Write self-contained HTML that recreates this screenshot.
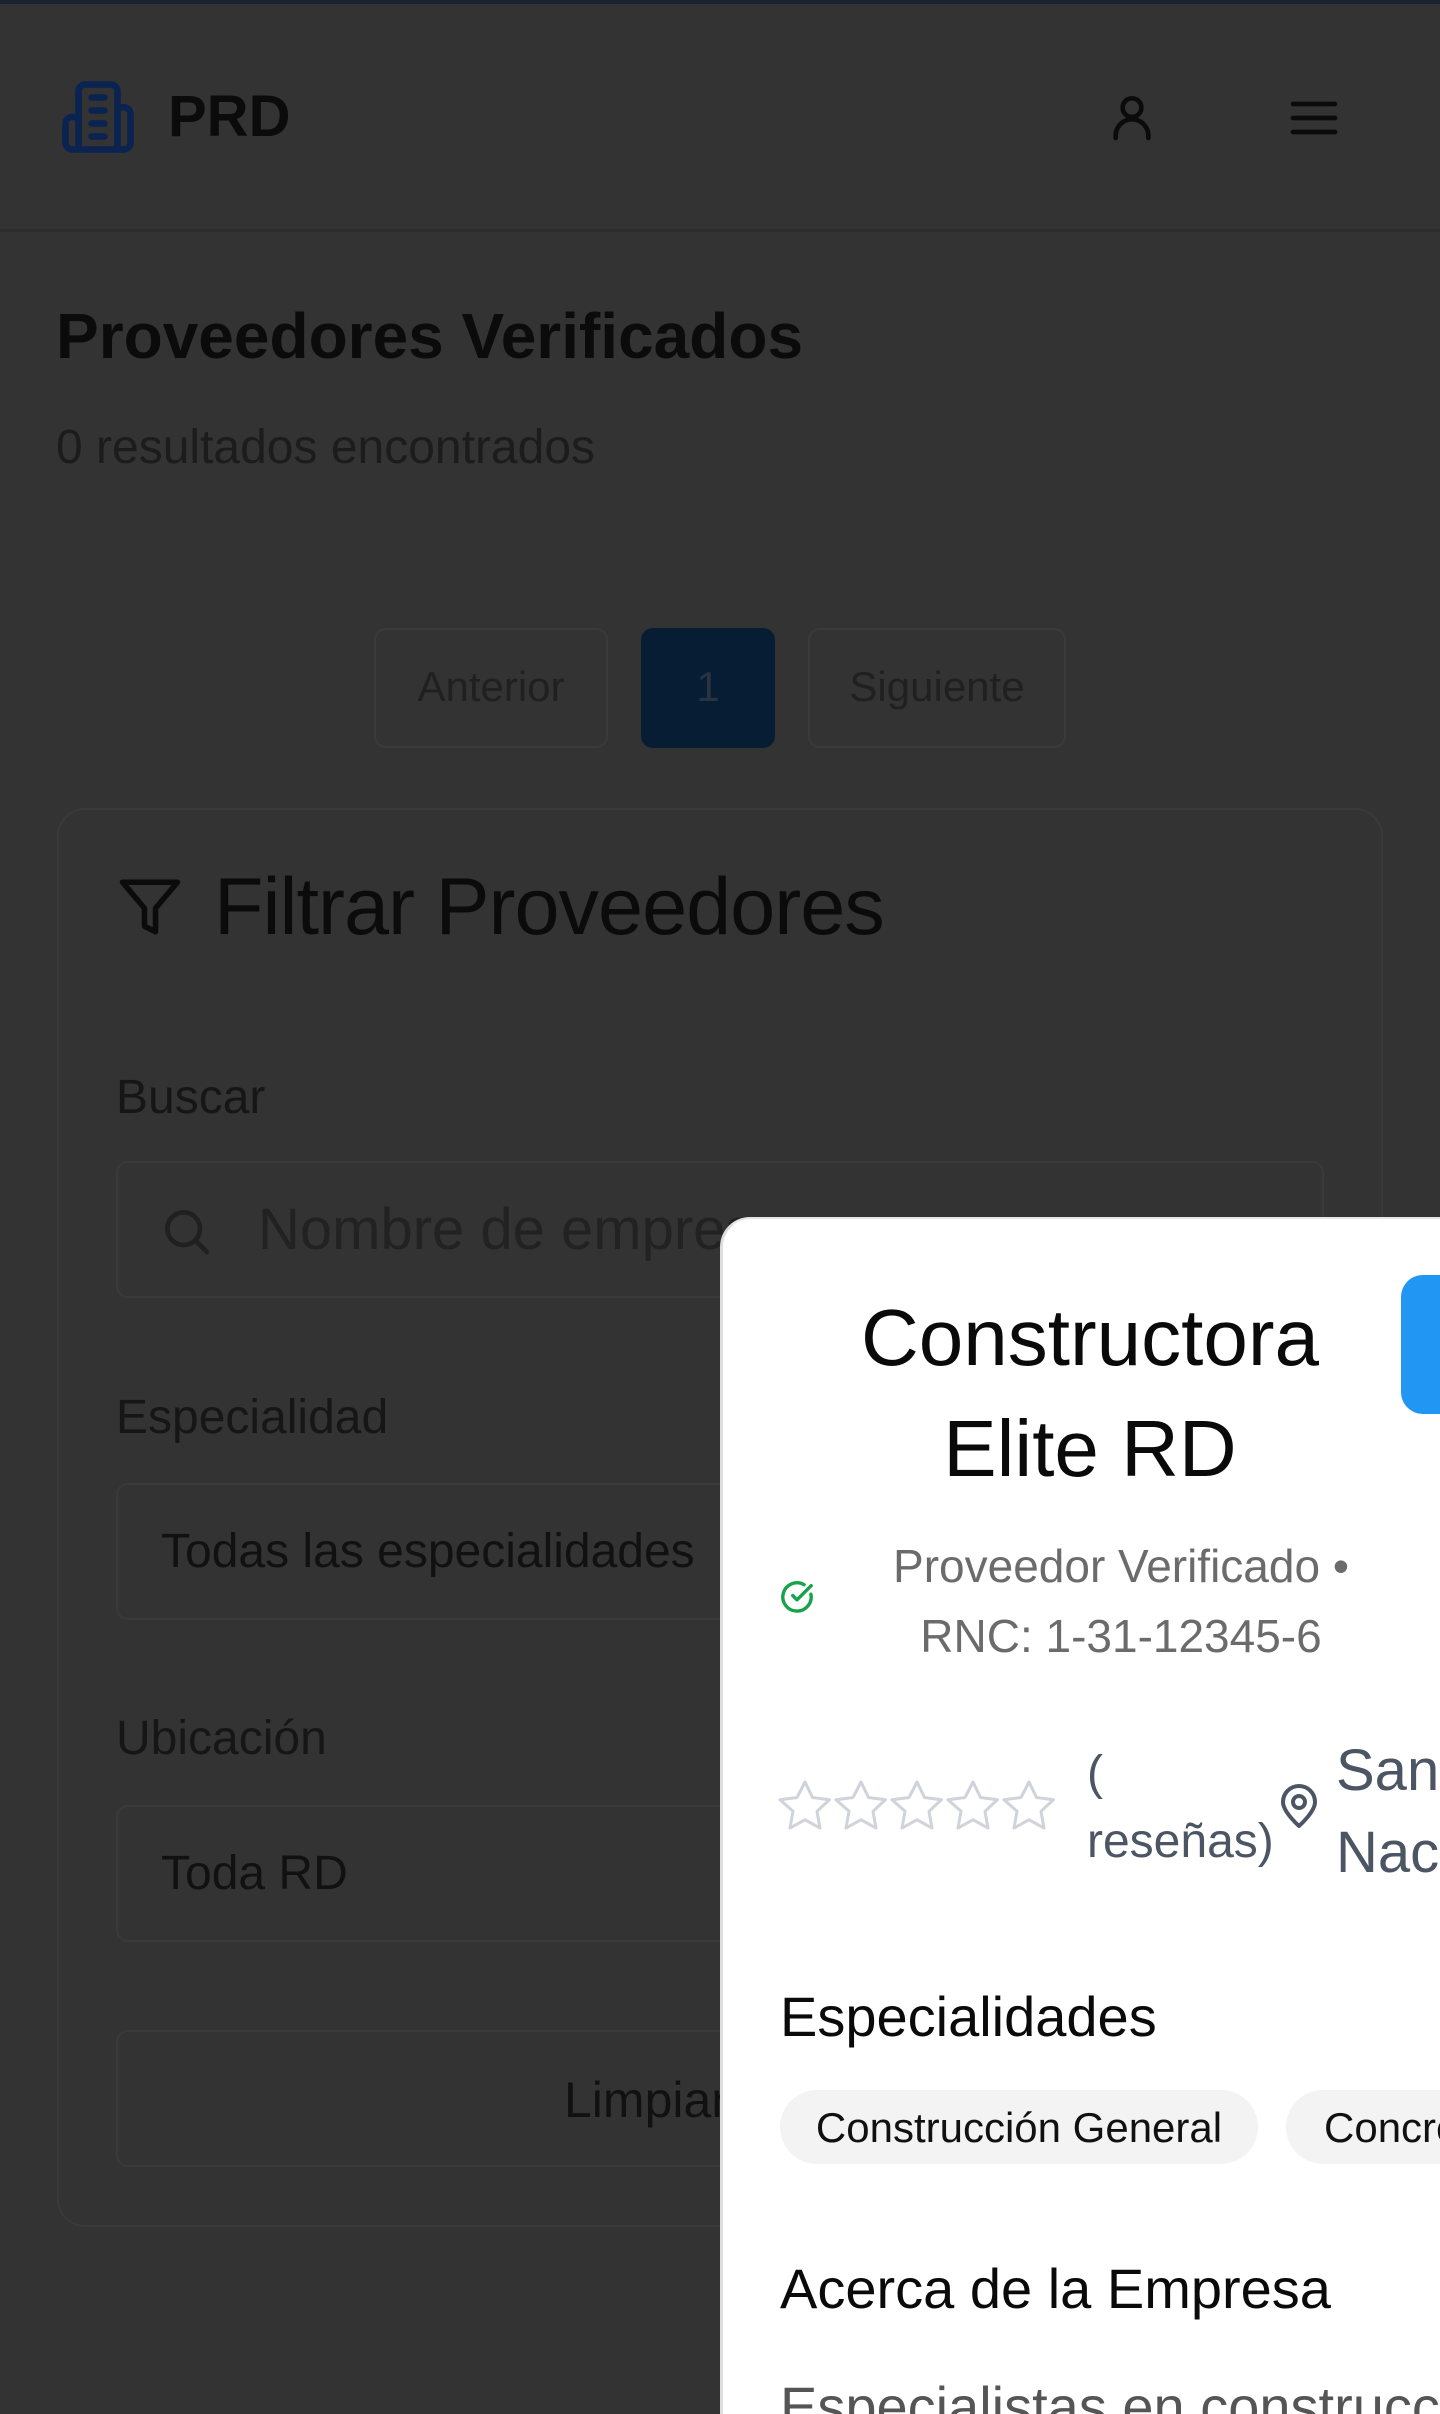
<!DOCTYPE html>
<html><head><meta charset="utf-8"><style>
*{margin:0;padding:0;box-sizing:border-box}
html,body{width:1440px;height:2414px;overflow:hidden}
body{background:#333333;font-family:"Liberation Sans",sans-serif;color:#0b0b0b}
#w{position:relative;width:1440px;height:2414px;overflow:hidden}
.a{position:absolute;white-space:nowrap}
.box{position:absolute;border:2px solid #3a3a3a;border-radius:12px}
</style></head><body><div id="w">
<div class="a" style="left:0;top:0;width:1440px;height:4px;background:#1b2232"></div>
<div class="a" style="left:0;top:229px;width:1440px;height:3px;background:#2d2d2d"></div>
<svg class="a" style="left:58px;top:78px" width="80" height="78" viewBox="0 0 24 24" fill="none" stroke="#0b2350" stroke-width="2" stroke-linecap="round" stroke-linejoin="round"><path d="M6 22V4a2 2 0 0 1 2-2h8a2 2 0 0 1 2 2v18Z"/><path d="M6 12H4a2 2 0 0 0-2 2v6a2 2 0 0 0 2 2h2"/><path d="M18 9h2a2 2 0 0 1 2 2v9a2 2 0 0 1-2 2h-2"/><path d="M10 6h4M10 10h4M10 14h4M10 18h4"/></svg>
<div class="a" style="left:168px;top:82px;font-size:58px;font-weight:700;line-height:70px">PRD</div>
<svg class="a" style="left:1104px;top:88px" width="56" height="58" viewBox="0 0 24 24" fill="none" stroke="#0b0b0b" stroke-width="2" stroke-linecap="round"><circle cx="12" cy="8" r="4"/><path d="M5 21v-1a7 7 0 0 1 14 0v1"/></svg>
<svg class="a" style="left:1286px;top:90px" width="56" height="56" viewBox="0 0 24 24" fill="none" stroke="#0b0b0b" stroke-width="2" stroke-linecap="round"><path d="M3 6h18M3 12h18M3 18h18"/></svg>
<div class="a" style="left:56px;top:298px;font-size:64px;font-weight:700;line-height:76px">Proveedores Verificados</div>
<div class="a" style="left:56px;top:420px;font-size:48px;line-height:56px;color:#1c1c1c">0 resultados encontrados</div>
<div class="box" style="left:374px;top:628px;width:234px;height:120px"></div>
<div class="a" style="left:374px;top:663px;width:234px;text-align:center;font-size:42px;color:#202020">Anterior</div>
<div class="a" style="left:641px;top:628px;width:134px;height:120px;border-radius:12px;background:#061d33"></div>
<div class="a" style="left:641px;top:663px;width:134px;text-align:center;font-size:42px;color:#2a3340">1</div>
<div class="box" style="left:808px;top:628px;width:258px;height:120px"></div>
<div class="a" style="left:808px;top:663px;width:258px;text-align:center;font-size:42px;color:#202020">Siguiente</div>
<div class="box" style="left:57px;top:808px;width:1326px;height:1419px;border-radius:28px"></div>
<svg class="a" style="left:116px;top:874px" width="68" height="66" viewBox="0 0 24 24" fill="none" stroke="#0b0b0b" stroke-width="2" stroke-linejoin="round"><path d="M22 3H2l8 9.46V19l4 2v-8.54L22 3z"/></svg>
<div class="a" style="left:214px;top:860px;font-size:81px;font-weight:500;line-height:94px;letter-spacing:-1px">Filtrar Proveedores</div>
<div class="a" style="left:116px;top:1070px;font-size:48px;color:#161616">Buscar</div>
<div class="box" style="left:116px;top:1161px;width:1208px;height:137px"></div>
<svg class="a" style="left:158px;top:1203px" width="56" height="56" viewBox="0 0 24 24" fill="none" stroke="#202020" stroke-width="2" stroke-linecap="round"><circle cx="11" cy="11" r="7"/><path d="M21 21l-4.3-4.3"/></svg>
<div class="a" style="left:258px;top:1196px;font-size:58px;color:#222">Nombre de empresa</div>
<div class="a" style="left:116px;top:1390px;font-size:48px;color:#161616">Especialidad</div>
<div class="box" style="left:116px;top:1483px;width:1208px;height:137px"></div>
<div class="a" style="left:161px;top:1524px;font-size:48px;color:#111">Todas las especialidades</div>
<div class="a" style="left:116px;top:1711px;font-size:48px;color:#161616">Ubicación</div>
<div class="box" style="left:116px;top:1805px;width:1208px;height:137px"></div>
<div class="a" style="left:161px;top:1846px;font-size:48px;color:#111">Toda RD</div>
<div class="box" style="left:116px;top:2030px;width:1208px;height:137px"></div>
<div class="a" style="left:564px;top:2071px;font-size:50px;color:#111">Limpiar Filtros</div>

<div class="a" style="left:720px;top:1217px;width:720px;height:1197px;background:#fff;border-radius:30px 0 0 0;border-left:3px solid #ddd;border-top:2px solid #e5e5e5"></div>
<div class="a" style="left:1401px;top:1275px;width:39px;height:139px;background:#2196f3;border-radius:22px 0 0 22px"></div>
<div class="a" style="left:790px;top:1282px;width:600px;text-align:center;font-size:80px;font-weight:500;line-height:111px;color:#0a0a0a;white-space:normal">Constructora<br>Elite RD</div>
<svg class="a" style="left:780px;top:1580px" width="34" height="34" viewBox="0 0 24 24" fill="none" stroke="#16a34a" stroke-width="2.4" stroke-linecap="round" stroke-linejoin="round"><path d="M21.8 10A10 10 0 1 1 17 3.3"/><path d="M9 11l3 3L22 4"/></svg>
<div class="a" style="left:846px;top:1531px;width:550px;text-align:center;font-size:46px;line-height:70px;color:#6b6b6b;white-space:normal">Proveedor Verificado •<br>RNC: 1-31-12345-6</div>
<svg class="a" style="left:778px;top:1778px" width="282" height="58" viewBox="0 0 282 56" fill="none" stroke="#cfd3da" stroke-width="3" stroke-linejoin="round">
<g id="s"><path d="M27 3l7.5 15.5 17 2.2-12.5 11.6 3 16.7-15-8.2-15 8.2 3-16.7L2 20.7l17-2.2z"/></g>
<use href="#s" x="56"/><use href="#s" x="112"/><use href="#s" x="168"/><use href="#s" x="224"/></svg>
<div class="a" style="left:1087px;top:1740px;font-size:48px;line-height:68px;color:#4b5563;white-space:normal">(<br>reseñas)</div>
<svg class="a" style="left:1275px;top:1780px" width="48" height="52" viewBox="0 0 24 24" fill="none" stroke="#4b5563" stroke-width="2" stroke-linecap="round" stroke-linejoin="round"><path d="M20 10c0 5-8 12-8 12s-8-7-8-12a8 8 0 0 1 16 0z"/><circle cx="12" cy="10" r="3"/></svg>
<div class="a" style="left:1336px;top:1730px;font-size:58px;line-height:82px;color:#4b5563;white-space:normal">Santiago<br>Nacional</div>
<div class="a" style="left:780px;top:1984px;font-size:56px;font-weight:500;color:#0a0a0a">Especialidades</div>
<div class="a" style="left:780px;top:2090px;width:478px;height:74px;border-radius:37px;background:#f3f3f3"></div>
<div class="a" style="left:780px;top:2104px;width:478px;text-align:center;font-size:42px;color:#111">Construcción General</div>
<div class="a" style="left:1286px;top:2090px;width:300px;height:74px;border-radius:37px;background:#f3f3f3"></div>
<div class="a" style="left:1324px;top:2104px;font-size:42px;color:#111">Concreto</div>
<div class="a" style="left:780px;top:2256px;font-size:56px;font-weight:500;color:#0a0a0a">Acerca de la Empresa</div>
<div class="a" style="left:780px;top:2374px;font-size:56px;color:#555">Especialistas en construcción</div>
</div></body></html>
